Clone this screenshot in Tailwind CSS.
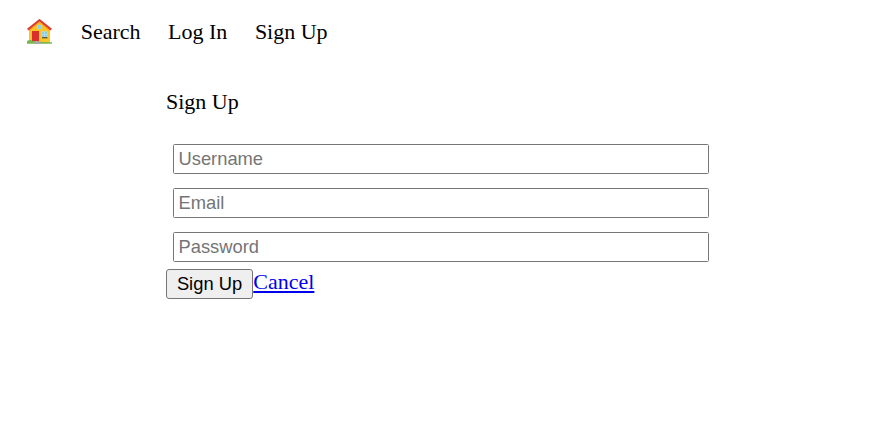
<!DOCTYPE html>
<html lang="en">
<head>
<meta charset="utf-8">
<title>Sign Up</title>
<script src="https://cdn.jsdelivr.net/npm/@tailwindcss/browser@4"></script>
</head>
<body class="bg-white text-black font-['Liberation_Serif',serif] text-[22px] leading-[25px]">
<nav class="flex items-start pt-[19px] pl-[27px] gap-[27.5px]">
  <a href="#" aria-label="Home" class="w-[26.25px] shrink-0">
    <svg class="block w-[25px] h-[25px]" viewBox="0 0 25 25">
      <path d="M2 10.5 12.5 1.5 23 10.5V23.5H2Z" fill="#fcc527"/>
      <path d="M2 11 12.5 3 23 11V12.4L12.5 4.2 2 12.4Z" fill="#f6ac1c"/>
      <path d="M.7 10.6 12.5 1.2 24.3 10.6" fill="none" stroke="#dc3b33" stroke-width="2.1"/>
      <path d="M5 12H12V22.5H5Z" fill="#d9302b"/>
      <path d="M10.5 6H14.5V10H10.5Z" fill="#82d4f7" stroke="#f3d891" stroke-width=".4"/>
      <path d="M15 12.3H20.2V18.3H15Z" fill="#75cff5" stroke="#f1dfa5" stroke-width=".5"/>
      <path d="M17.6 12.7V18M15.2 15.3H20" stroke="#d9edf0" stroke-width=".5"/>
      <path d="M15 18H20.5V19.4H15Z" fill="#655d4b"/>
      <path d="M0 24.8V22.2Q1.5 20.7 3.8 21L6 22.2 12 22.8 25 23.2V24.8Z" fill="#79b64d"/>
      <path d="M7.5 22.1H12.6L15 24.8H7.5Z" fill="#aaa5a0"/>
    </svg>
  </a>
  <a href="#">Search</a>
  <a href="#">Log In</a>
  <a href="#">Sign Up</a>
</nav>
<main class="ml-[166px] w-[550px] pt-[45px]">
  <h1>Sign Up</h1>
  <form>
    <div class="flex flex-col gap-[14px] px-[7px] pt-[30px] font-['Liberation_Sans',sans-serif] text-[18.333px]">
      <input type="text" placeholder="Username" class="h-[30px] w-[536px] border border-[#767676] rounded-[1.5px] px-[4.5px] leading-[21px] placeholder:text-[#757575]">
      <input type="email" placeholder="Email" class="h-[30px] w-[536px] border border-[#767676] rounded-[1.5px] px-[4.5px] leading-[21px] placeholder:text-[#757575]">
      <input type="password" placeholder="Password" class="h-[30px] w-[536px] border border-[#767676] rounded-[1.5px] px-[4.5px] leading-[21px] placeholder:text-[#757575]">
    </div>
    <div class="flex items-start gap-[0.3px] pt-[7px]">
      <button type="button" class="h-[30px] w-[87px] border border-[#767676] rounded-[3px] bg-[#efefef] pb-[1px] font-['Liberation_Sans',sans-serif] text-[18.333px] leading-[21px]">Sign Up</button>
      <a href="#" class="text-[#0000ee] underline decoration-2 underline-offset-2">Cancel</a>
    </div>
  </form>
</main>
</body>
</html>
